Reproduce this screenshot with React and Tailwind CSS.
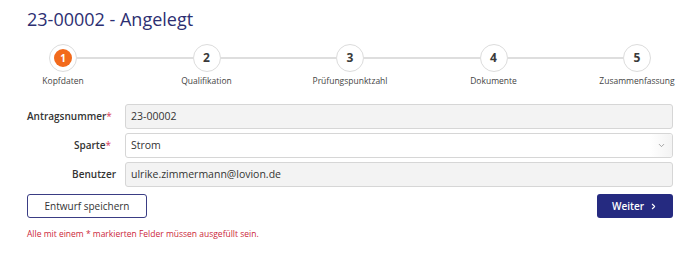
import React from "react";
import { ChevronDown, ChevronRight } from "lucide-react";

const STEPS = ["Kopfdaten", "Qualifikation", "Prüfungspunktzahl", "Dokumente", "Zusammenfassung"];

function StepCircle({ n, active }) {
  return (
    <div className="w-[28px] h-[28px] shrink-0 rounded-full border border-[#dcdcdc] bg-white flex items-center justify-center">
      {active ? (
        <div className="w-[18px] h-[18px] rounded-full bg-[#f26a1c] flex items-center justify-center text-[10px] font-bold text-white leading-none">
          {n}
        </div>
      ) : (
        <span className="text-[12px] font-bold text-[#3a3a3a] leading-none">{n}</span>
      )}
    </div>
  );
}

function Stepper() {
  return (
    <div className="flex flex-col mt-[13px]">
      <div className="flex items-center px-[22px]">
        {STEPS.map((s, i) => (
          <React.Fragment key={s}>
            <StepCircle n={i + 1} active={i === 0} />
            {i < STEPS.length - 1 && <div className="flex-1 h-[2px] bg-[#dedede]" />}
          </React.Fragment>
        ))}
      </div>
      <div className="flex justify-between mt-[3px]">
        {STEPS.map((s) => (
          <div key={s} className="w-[72px] flex justify-center">
            <span className="whitespace-nowrap text-[8.5px] leading-[12px] text-[#444]">{s}</span>
          </div>
        ))}
      </div>
    </div>
  );
}

function Row({ label, required, children }) {
  return (
    <div className="flex items-center gap-[9px]">
      <label className="w-[89px] text-right text-[10px] font-semibold text-[#333] whitespace-nowrap">
        {label}
        {required && <span className="text-[#d8385a] font-normal pr-[5px]">*</span>}
      </label>
      <div className="flex-1">{children}</div>
    </div>
  );
}

const App = () => {
  return (
    <div
      className="w-[700px] h-[254px] bg-white px-[27px] pt-[7px] overflow-hidden"
      style={{ fontFamily: "'Open Sans', 'Liberation Sans', sans-serif" }}
    >
      <h1 className="text-[18px] leading-[24px] text-[#2d2f72]">23-00002 - Angelegt</h1>

      <Stepper />

      <div className="flex flex-col gap-[4px] mt-[17px]">
        <Row label="Antragsnummer" required>
          <div className="h-[25px] rounded-[3px] border border-[#d6d6d6] bg-[#f3f3f3] px-[5px] flex items-center text-[10.5px] text-[#333]">
            23-00002
          </div>
        </Row>
        <Row label="Sparte" required>
          <div className="h-[25px] rounded-[3px] border border-[#d6d6d6] bg-white flex items-center text-[10.5px] text-[#333]">
            <span className="flex-1 px-[5px]">Strom</span>
            <div className="w-[22px] h-full bg-gradient-to-r from-white to-[#f3f3f3] flex items-center justify-center rounded-r-[3px]">
              <ChevronDown size={9} strokeWidth={2} color="#888" />
            </div>
          </div>
        </Row>
        <Row label="Benutzer">
          <div className="h-[25px] rounded-[3px] border border-[#d6d6d6] bg-[#f3f3f3] px-[5px] flex items-center text-[10.5px] text-[#333]">
            ulrike.zimmermann@lovion.de
          </div>
        </Row>
      </div>

      <div className="flex justify-between mt-[7px]">
        <button className="w-[120px] h-[24px] rounded-[3px] border border-[#3a3d84] bg-white text-[10px] text-[#333]">
          Entwurf speichern
        </button>
        <button className="w-[76px] h-[24px] rounded-[3px] bg-[#252a80] text-white text-[10px] font-semibold flex items-center justify-center gap-[5px]">
          Weiter
          <ChevronRight size={9} strokeWidth={3} />
        </button>
      </div>

      <p className="mt-[10px] text-[8.5px] leading-[12px] text-[#cc1f3a]">
        Alle mit einem * markierten Felder müssen ausgefüllt sein.
      </p>
    </div>
  );
};

export default App;
